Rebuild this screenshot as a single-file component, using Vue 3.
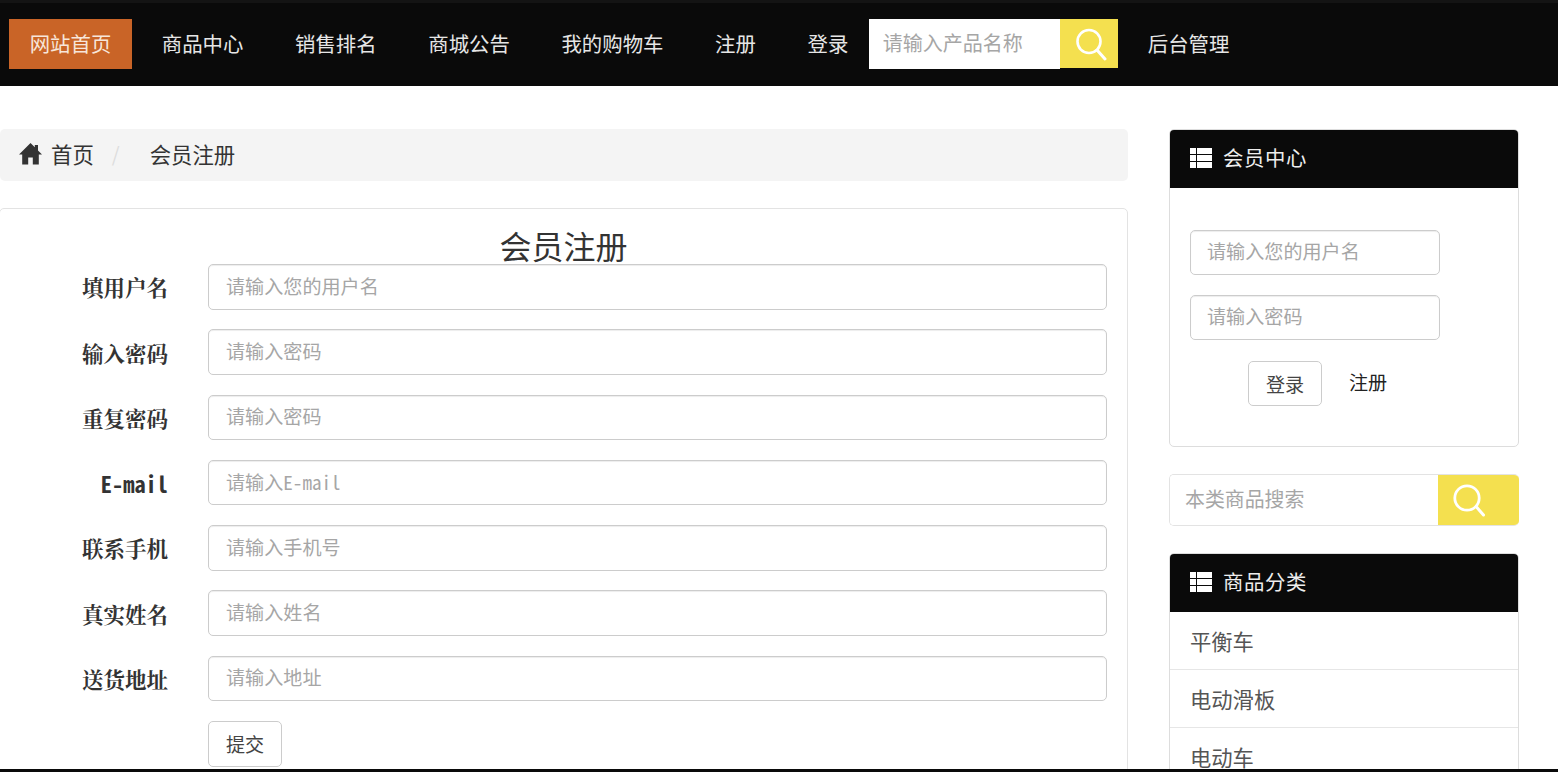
<script setup>
const nav = ['商品中心', '销售排名', '商城公告', '我的购物车', '注册', '登录']
const fields = [
  { label: '填用户名', ph: '请输入您的用户名' },
  { label: '输入密码', ph: '请输入密码' },
  { label: '重复密码', ph: '请输入密码' },
  { label: 'E-mail', ph: '请输入E-mail', mono: true },
  { label: '联系手机', ph: '请输入手机号' },
  { label: '真实姓名', ph: '请输入姓名' },
  { label: '送货地址', ph: '请输入地址' }
]
const cats = ['平衡车', '电动滑板', '电动车']
</script>

<template>
  <div class="page">
    <header class="top">
      <a class="home-link">网站首页</a>
      <a v-for="n in nav" :key="n" class="nav-link">{{ n }}</a>
      <div class="top-search">
        <input class="top-input" placeholder="请输入产品名称" />
        <span class="top-btn">
          <svg width="36" height="36" viewBox="0 0 36 36"><circle cx="18" cy="15.5" r="11.5" fill="none" stroke="#fff" stroke-width="2.6"/><path d="M26 24l8 9" stroke="#fff" stroke-width="3" stroke-linecap="round"/></svg>
        </span>
      </div>
      <a class="admin-link">后台管理</a>
    </header>

    <main class="main">
      <section class="left">
        <div class="crumb">
          <svg class="home-ico" width="23" height="22" viewBox="0 0 23 22"><path d="M11.5 0 L15.8 4.2 V2 H19 V7.4 L23 11.6 H19.8 V21.5 H13.8 V14.5 H9.2 V21.5 H3.2 V11.6 H0 Z" fill="#333"/></svg>
          <span class="crumb-home">首页</span>
          <span class="crumb-sep">/</span>
          <span class="crumb-cur">会员注册</span>
        </div>
        <div class="form-panel">
          <h2 class="form-title">会员注册</h2>
          <div v-for="f in fields" :key="f.label" class="row">
            <label class="lab" :class="{ mono: f.mono }">{{ f.label }}</label>
            <input class="ctl" :class="{ 'ctl-mono': f.mono }" :placeholder="f.ph" />
          </div>
          <div class="row submit-row">
            <button class="btn">提交</button>
          </div>
        </div>
      </section>

      <aside class="side">
        <div class="panel member">
          <div class="panel-head">
            <svg class="list-ico" width="22" height="20" viewBox="0 0 22 20"><path d="M0 0h6v6H0zM7 0H22v6H7zM0 7h6v6H0zM7 7H22v6H7zM0 14h6v6H0zM7 14H22v6H7z" fill="#fff"/></svg>
            <span>会员中心</span>
          </div>
          <div class="member-body">
            <input class="side-input" placeholder="请输入您的用户名" />
            <input class="side-input" placeholder="请输入密码" />
            <div class="member-actions">
              <button class="btn login">登录</button>
              <a class="reg">注册</a>
            </div>
          </div>
        </div>

        <div class="side-search">
          <input class="side-search-input" placeholder="本类商品搜索" />
          <span class="side-search-btn">
            <svg width="36" height="36" viewBox="0 0 36 36"><circle cx="16" cy="16" r="12.2" fill="none" stroke="#fff" stroke-width="2.8"/><path d="M25.5 25l7 8" stroke="#fff" stroke-width="3" stroke-linecap="round"/></svg>
          </span>
        </div>

        <div class="panel cats">
          <div class="panel-head">
            <svg class="list-ico" width="22" height="20" viewBox="0 0 22 20"><path d="M0 0h6v6H0zM7 0H22v6H7zM0 7h6v6H0zM7 7H22v6H7zM0 14h6v6H0zM7 14H22v6H7z" fill="#fff"/></svg>
            <span>商品分类</span>
          </div>
          <div v-for="c in cats" :key="c" class="cat">{{ c }}</div>
        </div>
      </aside>
    </main>

    <div class="bottom-bar"></div>
  </div>
</template>

<style>
html, body { margin: 0; overflow: hidden; background: #fff; }
</style>

<style scoped>
.page {
  height: 772px;
  display: flex;
  flex-direction: column;
  overflow: hidden;
  font-family: "Noto Sans CJK SC", "Liberation Sans", sans-serif;
  color: #333;
}
.top {
  flex: none;
  box-sizing: border-box;
  height: 86px;
  border-top: 3px solid #141414;
  background: #0a0a0a;
  display: flex;
  align-items: flex-start;
  padding: 16px 0 0 9px;
  font-size: 20.4px;
  color: #e6e6e6;
}
.home-link {
  width: 123px;
  height: 50px;
  line-height: 48px;
  text-align: center;
  background: #c96427;
  color: #f7e6da;
  margin-right: 4px;
}
.nav-link {
  height: 50px;
  line-height: 48px;
  padding: 0 25.83px;
}
.nav-link:nth-of-type(7) { padding-right: 20.5px; }
.top-search {
  display: flex;
  align-items: flex-start;
}
.top-input {
  width: 191px;
  height: 50px;
  box-sizing: border-box;
  border: 0;
  outline: 0;
  padding: 0 14px 4px;
  background: #fff;
  font: inherit;
  font-size: 20px;
}
.top-input::placeholder, .ctl::placeholder, .side-input::placeholder, .side-search-input::placeholder {
  color: #a6a6a6;
  opacity: 1;
}
.top-btn {
  width: 58px;
  height: 49px;
  background: #f4e04f;
  display: flex;
  align-items: center;
  justify-content: center;
}
.admin-link {
  height: 50px;
  line-height: 48px;
  margin-left: 30px;
}
.main {
  flex: 1;
  min-height: 0;
  overflow: hidden;
  display: flex;
  align-items: flex-start;
  gap: 41px;
  padding-top: 43px;
}
.left { width: 1128px; flex: none; }
.crumb {
  height: 52px;
  background: #f4f4f4;
  border-radius: 5px;
  display: flex;
  align-items: center;
  padding: 0 0 3px 19px;
  box-sizing: border-box;
  font-size: 21.4px;
  color: #333;
}
.home-ico { margin-right: 9px; }
.crumb-sep { color: #ddd; margin: 0 30px 0 18px; font-size: 20px; }
.form-panel {
  box-sizing: border-box;
  height: 600px;
  margin: 27px 0 0 -1px;
  padding: 0 20px 0 0;
  border: 1px solid #e3e3e3;
  border-radius: 5px;
}
.form-title {
  margin: 0 -20px 0 0;
  height: 55px;
  padding-top: 15px;
  box-sizing: border-box;
  line-height: 42px;
  text-align: center;
  font-size: 32px;
  font-weight: 400;
  white-space: nowrap;
}
.row {
  display: flex;
  align-items: center;
  height: 45.6px;
  margin-bottom: 19.7px;
}
.lab {
  width: 168px;
  flex: none;
  text-align: right;
  font-family: "Noto Serif CJK SC", "Liberation Serif", serif;
  font-weight: 700;
  font-size: 21.5px;
  color: #333;
  margin-right: 40px;
}
.lab.mono { font-family: "Noto Sans Mono CJK SC", "Liberation Mono", monospace; font-size: 22.4px; }
.ctl {
  flex: 1;
  min-width: 0;
  height: 100%;
  box-sizing: border-box;
  border: 1px solid #ccc;
  border-radius: 5px;
  padding: 0 17px 2px;
  font: inherit;
  font-size: 19.1px;
  outline: 0;
  box-shadow: inset 0 1px 1px rgba(0,0,0,.075);
}
.ctl-mono { font-family: "Noto Sans Mono CJK SC", "Noto Sans CJK SC", monospace; }
.submit-row { padding-left: 208px; margin-bottom: 0; }
.btn {
  height: 46px;
  width: 74px;
  box-sizing: border-box;
  background: #fff;
  border: 1px solid #ccc;
  border-radius: 5px;
  font: inherit;
  font-size: 19.1px;
  color: #444;
  padding: 0;
}
.btn.login { height: 45px; }
.side { width: 350px; flex: none; }
.panel {
  box-sizing: border-box;
  border: 1px solid #ddd;
  border-radius: 5px;
  overflow: hidden;
  background: #fff;
}
.panel-head {
  height: 58px;
  box-sizing: border-box;
  padding: 0 0 4px 20px;
  background: #0a0a0a;
  color: #eee;
  display: flex;
  align-items: center;
  font-size: 20.4px;
  letter-spacing: 0.6px;
}
.list-ico { margin-right: 11px; margin-top: 1px; }
.member { height: 318px; }
.member-body {
  padding: 42px 0 0 20px;
}
.side-input {
  display: block;
  width: 250px;
  height: 45px;
  box-sizing: border-box;
  border: 1px solid #ccc;
  border-radius: 5px;
  padding: 0 16px 3px;
  margin-bottom: 20px;
  font: inherit;
  font-size: 19.1px;
  outline: 0;
  box-shadow: inset 0 1px 1px rgba(0,0,0,.075);
}
.member-actions {
  display: flex;
  align-items: center;
  padding-left: 58px;
  margin-top: 21px;
}
.reg { margin-left: 27px; font-size: 19.1px; color: #222; margin-top: -4px; }
.side-search {
  box-sizing: border-box;
  height: 52px;
  margin-top: 27px;
  border: 1px solid #e3e3e3;
  border-right: 0;
  border-radius: 5px;
  display: flex;
  overflow: hidden;
}
.side-search-input {
  flex: 1;
  min-width: 0;
  border: 0;
  outline: 0;
  padding: 0 15px 3px;
  font: inherit;
  font-size: 19.9px;
}
.side-search-btn {
  width: 81px;
  flex: none;
  background: #f4e04f;
  display: flex;
  align-items: center;
  justify-content: center;
  padding-right: 19px;
  box-sizing: border-box;
}
.cats { margin-top: 27px; }
.cat {
  height: 58px;
  line-height: 57px;
  padding-left: 20px;
  font-size: 21.3px;
  color: #555;
  border-bottom: 1px solid #e6e6e6;
  box-sizing: border-box;
}
.bottom-bar { flex: none; height: 3px; background: #0a0a0a; }
</style>
